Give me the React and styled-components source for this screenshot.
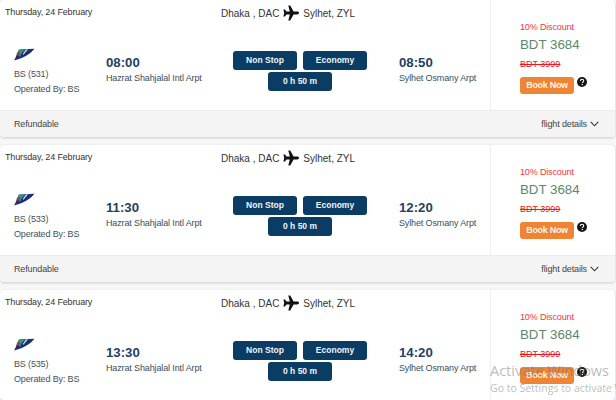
import styled, { createGlobalStyle } from "styled-components";

const GlobalStyle = createGlobalStyle`
  html, body {
    margin: 0;
    padding: 0;
    height: 400px;
    overflow: hidden;
    background: #f7f7f7;
    font-family: "Liberation Sans", Arial, sans-serif;
  }
`;

const flights = [
  { id: 531, dep: "08:00", arr: "08:50", footer: true },
  { id: 533, dep: "11:30", arr: "12:20", footer: true },
  { id: 535, dep: "13:30", arr: "14:20", footer: false },
];

const Plane = () => (
  <svg width="16" height="16" viewBox="0 0 16 16" fill="#111">
    <path d="M16 8c0-.9-.9-1.400-1.800-1.400H10.600L7.200.6H5.300L6.800 6.600H3.400L2 4.500H.4L1.200 8 .4 11.500H2L3.400 9.400H6.800L5.300 15.400H7.200L10.600 9.400H14.200C15.100 9.400 16 8.900 16 8z" />
  </svg>
);

const Logo = () => (
  <svg width="21" height="13" viewBox="0 0 21 13">
    <path d="M5 1.500 20.500.8C17 5 12 9.500 0 12.500 2 9.500 3 5 5 1.500z" fill="#1d2f7c" />
    <path d="M4.500 2 12 1.600C9 3 7 6 6 9 4.500 7 3.500 4.500 4.500 2z" fill="#2f9a78" />
    <path d="M3 4.500h3.500L5.500 7.500H2.500z" fill="#b5333a" />
    <path d="M12 1.500l2-.2-5 6 .3-2z" fill="#dfe6f5" />
  </svg>
);

const Help = () => (
  <svg width="10" height="10" viewBox="0 0 10 10">
    <circle cx="5" cy="5" r="5" fill="#161616" />
    <path d="M3.400 3.900c0-1 .7-1.600 1.600-1.600s1.700.6 1.700 1.500c0 1.200-1.400 1.200-1.400 2.200" fill="none" stroke="#fff" strokeWidth="1.100" />
    <rect x="4.700" y="6.900" width="1.200" height="1.200" fill="#fff" />
  </svg>
);

const Chevron = () => (
  <svg width="9" height="6" viewBox="0 0 9 6">
    <path d="M.7.900 4.500 4.800 8.300.9" fill="none" stroke="#333" strokeWidth="1.100" />
  </svg>
);

const FlightCard = ({ flight }) => (
  <Card>
    <Body>
      <Details>
        <TopRow>
          <DateText>Thursday, 24 February</DateText>
          <Route>
            <span>Dhaka , DAC</span>
            <Plane />
            <span>Sylhet, ZYL</span>
          </Route>
        </TopRow>
        <InfoRow>
          <Airline>
            <Logo />
            <small>BS ({flight.id})</small>
            <small>Operated By: BS</small>
          </Airline>
          <Stop $width={118}>
            <Time>{flight.dep}</Time>
            <Airport>Hazrat Shahjalal Intl Arpt</Airport>
          </Stop>
          <Badges>
            <Badge>Non Stop</Badge>
            <Badge>Economy</Badge>
            <Badge>0 h 50 m</Badge>
          </Badges>
          <Stop>
            <Time>{flight.arr}</Time>
            <Airport>Sylhet Osmany Arpt</Airport>
          </Stop>
        </InfoRow>
      </Details>
      <Price>
        <Discount>10% Discount</Discount>
        <Amount>BDT 3684</Amount>
        <OldAmount>BDT 3999</OldAmount>
        <BookRow>
          <BookButton>Book Now</BookButton>
          <Help />
        </BookRow>
      </Price>
    </Body>
    {flight.footer && (
      <Footer>
        <span>Refundable</span>
        <DetailsLink>
          flight details <Chevron />
        </DetailsLink>
      </Footer>
    )}
  </Card>
);

const App = () => (
  <>
    <GlobalStyle />
    <Page>
      {flights.map((flight) => (
        <FlightCard key={flight.id} flight={flight} />
      ))}
      <Watermark>
        <strong>Activate Windows</strong>
        <span>Go to Settings to activate Windows.</span>
      </Watermark>
    </Page>
  </>
);

export default App;

const Page = styled.div`
  position: relative;
  width: 616px;
  height: 400px;
  overflow: hidden;
  display: flex;
  flex-direction: column;
  gap: 8px;
  padding-right: 1px;
  box-sizing: border-box;
`;

const Card = styled.div`
  flex: none;
  background: #fff;
  border-radius: 4px;
  box-shadow: 0 1px 3px rgba(0, 0, 0, 0.18);
  overflow: hidden;
`;

const Body = styled.div`
  display: flex;
  height: 110px;
`;

const Details = styled.div`
  flex: 1;
  display: flex;
  flex-direction: column;
`;

const TopRow = styled.div`
  height: 45px;
  display: flex;
  align-items: flex-start;
  padding-left: 5px;
`;

const DateText = styled.div`
  width: 216px;
  flex: none;
  padding-top: 7px;
  font-size: 9px;
  letter-spacing: -0.15px;
  line-height: 11px;
  color: #333;
`;

const Route = styled.div`
  display: flex;
  align-items: center;
  gap: 4px;
  height: 26px;
  font-size: 10px;
  color: #333;
`;

const InfoRow = styled.div`
  display: flex;
  align-items: flex-start;
`;

const Airline = styled.div`
  width: 92px;
  box-sizing: border-box;
  padding-left: 14px;
  padding-top: 3px;
  display: flex;
  flex-direction: column;
  align-items: flex-start;
  small {
    font-size: 9px;
    letter-spacing: -0.15px;
    line-height: 15px;
    color: #44505c;
  }
  svg {
    margin-bottom: 6px;
  }
`;

const Stop = styled.div`
  width: ${(p) => (p.$width ? p.$width + "px" : "auto")};
  flex: none;
  padding: 9px 0 0 14px;
  display: flex;
  flex-direction: column;
`;

const Time = styled.div`
  font-size: 13.200px;
  line-height: 18px;
  font-weight: 700;
  color: #1d4263;
`;

const Airport = styled.div`
  font-size: 9px;
  letter-spacing: -0.13px;
  line-height: 13px;
  color: #3c4d5c;
  white-space: nowrap;
`;

const Badges = styled.div`
  width: 134px;
  flex: none;
  margin: 6px 18px 0 9px;
  display: flex;
  flex-wrap: wrap;
  justify-content: center;
  gap: 2px 6px;
`;

const Badge = styled.div`
  width: 64px;
  height: 19px;
  background: #0a3c64;
  border-radius: 3px;
  color: #f2f5f8;
  font-size: 8.500px;
  font-weight: 700;
  text-align: center;
  line-height: 18px;
`;

const Price = styled.div`
  width: 125px;
  flex: none;
  box-sizing: border-box;
  border-left: 1px solid #eceff2;
  padding: 21px 0 0 29px;
`;

const Discount = styled.div`
  font-size: 9px;
  letter-spacing: -0.15px;
  line-height: 12px;
  color: #f5333f;
`;

const Amount = styled.div`
  font-size: 13.300px;
  line-height: 16px;
  margin-top: 4px;
  color: #5a8a6a;
`;

const OldAmount = styled.div`
  font-size: 9px;
  line-height: 12px;
  margin-top: 5px;
  color: #f01522;
  text-decoration: line-through;
`;

const BookRow = styled.div`
  display: flex;
  align-items: flex-start;
  gap: 3px;
  margin-top: 7px;
`;

const BookButton = styled.div`
  width: 54px;
  height: 17px;
  background: #ee8434;
  border-radius: 3px;
  color: #fff3e8;
  font-size: 9px;
  font-weight: 700;
  letter-spacing: -0.3px;
  line-height: 17px;
  text-align: center;
`;

const Footer = styled.div`
  height: 27px;
  background: #f4f4f4;
  border-top: 1px solid #ececec;
  box-sizing: border-box;
  display: flex;
  align-items: center;
  justify-content: space-between;
  padding: 0 16px 0 14px;
  font-size: 9px;
  letter-spacing: -0.13px;
  color: #444;
`;

const DetailsLink = styled.div`
  display: flex;
  align-items: center;
  gap: 3px;
`;

const Watermark = styled.div`
  position: absolute;
  left: 490px;
  top: 361px;
  display: flex;
  flex-direction: column;
  pointer-events: none;
  color: rgba(120, 120, 120, 0.5);
  white-space: nowrap;
  font-family: "Open Sans", sans-serif;
  strong {
    font-weight: 400;
    font-size: 14.500px;
    line-height: 20px;
  }
  span {
    font-size: 10.500px;
    line-height: 14px;
  }
`;
